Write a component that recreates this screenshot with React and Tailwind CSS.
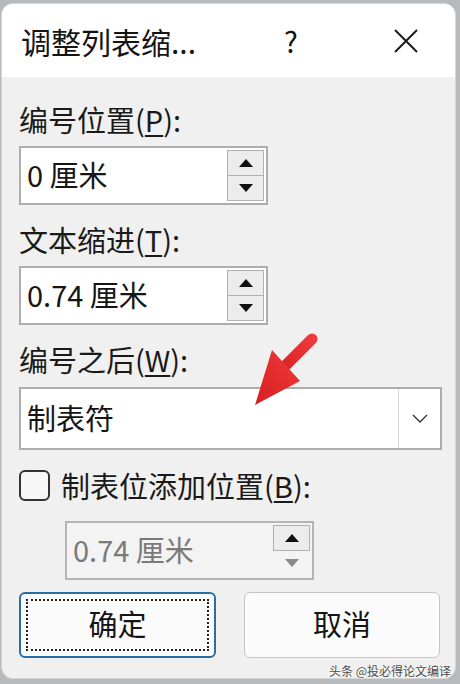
import React from "react";

const font = { fontFamily: '"Noto Sans CJK SC", "Noto Sans", sans-serif' };

function Triangle({ up, color = "#111" }) {
  return (
    <svg width="14" height="8" viewBox="0 0 14 8">
      {up ? <polygon points="7,0 14,8 0,8" fill={color} /> : <polygon points="0,0 14,0 7,8" fill={color} />}
    </svg>
  );
}

function Spin({ value, disabled }) {
  return (
    <div
      className={
        "flex h-[59px] w-[249px] items-center border-2 pl-[6px] pr-[2px] " +
        (disabled ? "border-[#b4b4b4] bg-[#f3f3f3]" : "border-[#adadad] bg-white")
      }
    >
      <div className={"flex-1 pb-[3px] text-[29px] leading-none " + (disabled ? "text-[#7a7a7a]" : "text-[#151515]")}>{value}</div>
      <div className="flex h-[51px] w-[37px] flex-col">
        <div className="flex h-[26px] items-center justify-center border border-[#b0b0b0] bg-[#ececec]">
          <Triangle up />
        </div>
        <div
          className={
            "flex h-[25px] items-center justify-center border border-t-0 " +
            (disabled ? "border-transparent bg-[#f3f3f3]" : "border-[#b0b0b0] bg-[#ececec]")
          }
        >
          <Triangle color={disabled ? "#8a8a8a" : "#111"} />
        </div>
      </div>
    </div>
  );
}

function Label({ text, k }) {
  return (
    <div className="h-[36px] text-[29px] leading-[36px] text-[#1a1a1a]">
      {text}(<span className="underline underline-offset-[3px]">{k}</span>):
    </div>
  );
}

export default function App() {
  return (
    <div className="relative h-[684px] w-[460px] overflow-hidden bg-[#b6babc] pt-[3px]" style={font}>
      <div className="ml-[1px] h-[676px] w-[455px] overflow-hidden rounded-[12px] border border-[#d6d6d6] bg-[#f0f0f0]">
        {/* title bar */}
        <div className="flex h-[73px] items-center bg-white pl-[19px] text-[#141414]">
          <div className="w-[250px] text-[30px] leading-none">调整列表缩...</div>
          <div className="ml-[13px] text-[29px] leading-none">?</div>
          <svg className="ml-[95px]" width="26" height="26" viewBox="0 0 26 26">
            <path d="M2 2 L24 24 M24 2 L2 24" stroke="#1a1a1a" strokeWidth="2" />
          </svg>
        </div>

        {/* body */}
        <div className="relative pl-[17px] pt-[24px]">
          <Label text="编号位置" k="P" />
          <div className="mt-[9px]">
            <Spin value="0 厘米" />
          </div>

          <div className="mt-[16px]">
            <Label text="文本缩进" k="T" />
          </div>
          <div className="mt-[9px]">
            <Spin value="0.74 厘米" />
          </div>

          <div className="mt-[16px]">
            <Label text="编号之后" k="W" />
          </div>
          <div className="mt-[10px] flex h-[63px] w-[423px] border-2 border-[#adadad] bg-white">
            <div className="flex flex-1 items-center pb-[3px] pl-[6px] text-[29px] leading-none text-[#151515]">制表符</div>
            <div className="flex w-[42px] items-center justify-center border-l border-[#d9d9d9]">
              <svg width="16" height="9" viewBox="0 0 16 9">
                <path d="M1 1 L8 8 L15 1" fill="none" stroke="#333" strokeWidth="1.4" />
              </svg>
            </div>
          </div>

          <div className="mt-[17px] flex h-[36px] items-center">
            <div className="h-[31px] w-[31px] rounded-[6px] border-2 border-[#333] bg-[#f7f7f7]" />
            <div className="ml-[11px] text-[29px] leading-[36px] text-[#1a1a1a]">
              制表位添加位置(<span className="underline underline-offset-[3px]">B</span>):
            </div>
          </div>
          <div className="ml-[46px] mt-[18px]">
            <Spin value="0.74 厘米" disabled />
          </div>

          <div className="mt-[12px] flex">
            <div className="flex h-[66px] w-[197px] items-center justify-center rounded-[6px] border-2 border-[#2b6ea3] bg-[#fbfbfb] p-[5px]">
              <div className="flex h-full w-full items-center justify-center border-2 border-dotted border-[#222] pb-[3px] text-[29px] leading-none text-[#141414]">
                确定
              </div>
            </div>
            <div className="ml-[28px] flex h-[66px] w-[196px] items-center justify-center rounded-[6px] border border-[#c4c4c4] bg-[#fbfbfb] pb-[3px] text-[29px] leading-none text-[#141414]">
              取消
            </div>
          </div>

          {/* red arrow annotation */}
          <svg className="absolute left-[240px] top-[250px]" width="90" height="90" viewBox="0 0 90 90">
            <defs>
              <linearGradient id="rg" x1="0" y1="1" x2="1" y2="0">
                <stop offset="0" stopColor="#d81e22" />
                <stop offset="1" stopColor="#ee3a3a" />
              </linearGradient>
            </defs>
            <path d="M70 12 L34 48" stroke="url(#rg)" strokeWidth="11" strokeLinecap="round" />
            <polygon points="13,78 30,23 58,54" fill="url(#rg)" />
          </svg>
        </div>
      </div>

      <div
        className="absolute left-[329px] top-[663px] whitespace-nowrap text-[12px] leading-[16px] text-[#4a4a4a]"
        style={{ textShadow: "0 0 2px #fff, 0 0 2px #fff" }}
      >
        头条 @投必得论文编译
      </div>
    </div>
  );
}
